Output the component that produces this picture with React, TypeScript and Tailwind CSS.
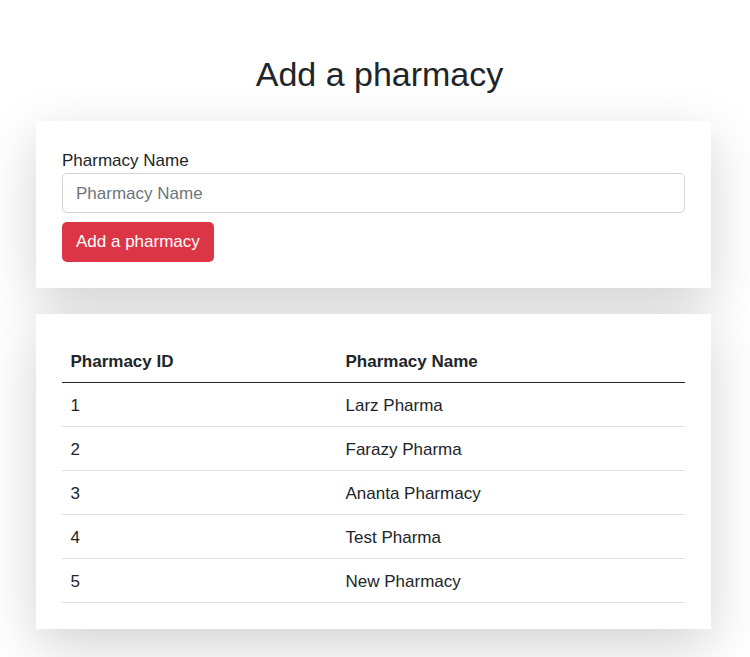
const pharmacies = [
  { id: 1, name: "Larz Pharma" },
  { id: 2, name: "Farazy Pharma" },
  { id: 3, name: "Ananta Pharmacy" },
  { id: 4, name: "Test Pharma" },
  { id: 5, name: "New Pharmacy" },
];

export default function App() {
  return (
    <div className="min-h-screen bg-white pl-[36px] pr-[39px] pt-[54px] pb-[26px] font-['Liberation_Sans',Arial,sans-serif] text-[17px] leading-[25.5px] text-[#212529]">
      <h1 className="mb-[26px] ml-[12px] text-center text-[34px] leading-[41px] font-normal">
        Add a pharmacy
      </h1>

      <form
        onSubmit={(e) => e.preventDefault()}
        className="mb-[26px] bg-white p-[26px] shadow-[0_17px_51px_rgba(0,0,0,0.175)]"
      >
        <label htmlFor="pharmacyName" className="block pt-[1px] h-[25.5px]">
          Pharmacy Name
        </label>
        <input
          id="pharmacyName"
          type="text"
          placeholder="Pharmacy Name"
          className="block h-[40px] w-full rounded-[5px] border border-[#ced4da] bg-white px-[13px] pt-[2px] text-[17px] text-[#212529] placeholder-[#6c757d] outline-none"
        />
        <button
          type="submit"
          className="mt-[9px] h-[40px] rounded-[5px] bg-[#dc3545] px-[14px] pt-[1px] text-[17px] text-white"
        >
          Add a pharmacy
        </button>
      </form>

      <div className="bg-white p-[26px] shadow-[0_17px_51px_rgba(0,0,0,0.175)]">
        <table className="w-full border-collapse text-left">
          <thead>
            <tr className="h-[43px] border-b border-[#212529]">
              <th className="w-[275px] px-[8.5px] pt-[2px] font-bold">Pharmacy ID</th>
              <th className="px-[8.5px] pt-[2px] font-bold">Pharmacy Name</th>
            </tr>
          </thead>
          <tbody>
            {pharmacies.map((p) => (
              <tr key={p.id} className="h-[44px] border-b border-[#dee2e6]">
                <td className="px-[8.5px] pt-[2px]">{p.id}</td>
                <td className="px-[8.5px] pt-[2px]">{p.name}</td>
              </tr>
            ))}
          </tbody>
        </table>
      </div>
    </div>
  );
}
